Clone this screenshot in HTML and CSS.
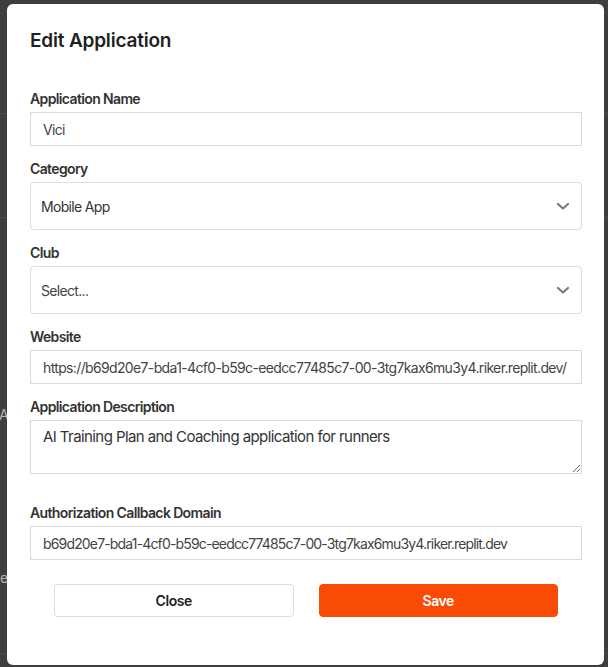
FILE: index.html
```html
<!DOCTYPE html>
<html lang="en">
<head>
<meta charset="utf-8">
<title>Edit Application</title>
<link rel="stylesheet" href="styles.css">
</head>
<body>
<div class="page">
  <div class="page-line line-a"></div>
  <div class="page-line line-b"></div>
  <span class="page-text text-a">Ar</span>
  <span class="page-text text-b">e</span>
  <div class="page-line line-c"></div>
</div>
<div class="modal">
  <h2 class="title">Edit Application</h2>
  <form class="form">
    <div class="field">
      <label class="label">Application Name</label>
      <input class="input" type="text" value="Vici">
    </div>
    <div class="field">
      <label class="label">Category</label>
      <div class="select">
        <span class="select-value">Mobile App</span>
        <svg class="chevron" width="14" height="9" viewBox="0 0 14 9"><path d="M2 2l5 4.5L12 2" fill="none" stroke="#7a7a7a" stroke-width="2.2" stroke-linecap="round" stroke-linejoin="round"/></svg>
      </div>
    </div>
    <div class="field">
      <label class="label">Club</label>
      <div class="select">
        <span class="select-value placeholder">Select...</span>
        <svg class="chevron" width="14" height="9" viewBox="0 0 14 9"><path d="M2 2l5 4.5L12 2" fill="none" stroke="#7a7a7a" stroke-width="2.2" stroke-linecap="round" stroke-linejoin="round"/></svg>
      </div>
    </div>
    <div class="field">
      <label class="label">Website</label>
      <input class="input" type="text" value="https://b69d20e7-bda1-4cf0-b59c-eedcc77485c7-00-3tg7kax6mu3y4.riker.replit.dev/">
    </div>
    <div class="field field-desc">
      <label class="label">Application Description</label>
      <textarea class="textarea">AI Training Plan and Coaching application for runners</textarea>
    </div>
    <div class="field">
      <label class="label">Authorization Callback Domain</label>
      <input class="input input-lg" type="text" value="b69d20e7-bda1-4cf0-b59c-eedcc77485c7-00-3tg7kax6mu3y4.riker.replit.dev">
    </div>
    <div class="actions">
      <button type="button" class="btn btn-close">Close</button>
      <button type="button" class="btn btn-save">Save</button>
    </div>
  </form>
</div>
</body>
</html>
```

FILE: styles.css
```css
* { box-sizing: border-box; }
html, body { margin: 0; height: 100%; }
body {
  background: #3e3e3e;
  font-family: Inter, "Noto Sans", sans-serif;
  overflow: hidden;
}
.page { position: relative; height: 100%; }
.page-line {
  position: absolute;
  left: 0;
  width: 100%;
  height: 1px;
  background: #4a4a4a;
}
.line-a { top: 113px; }
.line-b { top: 217px; }
.line-c { top: 653px; }
.page-text {
  position: absolute;
  left: -1px;
  font-size: 14px;
  color: #b5b5b5;
}
.text-a { top: 406px; }
.text-b { top: 569px; left: 0; }

.modal {
  position: fixed;
  left: 7px;
  top: 4px;
  width: 597px;
  height: 661px;
  background: #fff;
  border-radius: 6px;
  padding: 24px 22px 0 23px;
}
.title {
  margin: 0 0 35px;
  font-size: 19px;
  line-height: 26px;
  font-weight: 600;
  letter-spacing: -0.01em;
  color: #1f1f1f;
}
.form { display: flex; flex-direction: column; }
.field { display: flex; flex-direction: column; margin-bottom: 13px; }
.label {
  font-size: 14px;
  line-height: 20px;
  font-weight: 600;
  letter-spacing: -0.045em;
  color: #333;
  margin-bottom: 3px;
}
.input {
  height: 34px;
  border: 1px solid #d9d7e0;
  border-radius: 0;
  padding: 0 12px;
  font-family: inherit;
  font-size: 14px;
  letter-spacing: -0.046em;
  color: #444;
  outline: none;
}
.input-lg { font-size: 14px; letter-spacing: -0.06em; }
.select {
  height: 48px;
  border: 1px solid #dcdcdc;
  border-radius: 4px;
  display: flex;
  align-items: center;
  justify-content: space-between;
  padding: 0 11px 0 10px;
}
.select-value { font-size: 14px; letter-spacing: -0.048em; color: #333; }
.select-value.placeholder { color: #444; }
.chevron { display: block; }
.field-desc { margin-bottom: 29px; }
.textarea {
  height: 54px;
  border: 1px solid #d9d7e0;
  border-radius: 0;
  padding: 6px 12px;
  font-family: inherit;
  font-size: 15px;
  line-height: 20px;
  letter-spacing: -0.039em;
  color: #333;
  outline: none;
  resize: vertical;
}
.actions {
  display: flex;
  gap: 25px;
  padding: 11px 24px 0;
}
.btn {
  flex: 1;
  height: 33px;
  border-radius: 4px;
  font-family: inherit;
  font-size: 14px;
  font-weight: 600;
  letter-spacing: -0.03em;
  cursor: pointer;
}
.btn-close {
  background: #fff;
  border: 1px solid #dcdcdc;
  color: #222;
}
.btn-save {
  background: #f94a06;
  border: 1px solid #f94a06;
  color: #fff;
}
```
